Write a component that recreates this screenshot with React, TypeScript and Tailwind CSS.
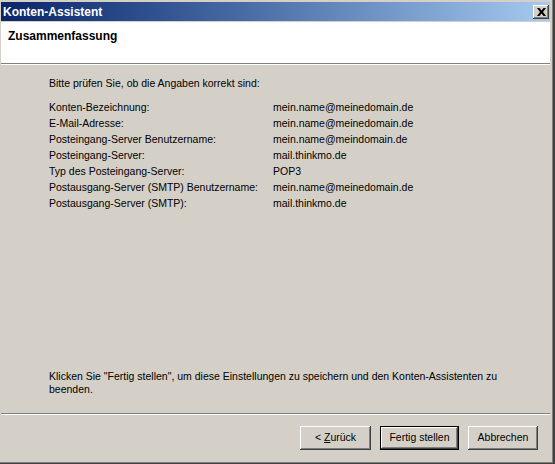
import React from 'react';

const rows: [string, string][] = [
  ['Konten-Bezeichnung:', 'mein.name@meinedomain.de'],
  ['E-Mail-Adresse:', 'mein.name@meinedomain.de'],
  ['Posteingang-Server Benutzername:', 'mein.name@meindomain.de'],
  ['Posteingang-Server:', 'mail.thinkmo.de'],
  ['Typ des Posteingang-Server:', 'POP3'],
  ['Postausgang-Server (SMTP) Benutzername:', 'mein.name@meinedomain.de'],
  ['Postausgang-Server (SMTP):', 'mail.thinkmo.de'],
];

const btn =
  'h-[24px] bg-[#d4d0c8] text-black shadow-[inset_-1px_-1px_#404040,inset_1px_1px_#ffffff,inset_-2px_-2px_#808080,inset_2px_2px_#d4d0c8]';

export default function App() {
  return (
    <div
      className="w-[555px] h-[464px] flex flex-col bg-[#d4d0c8] border-r-[2px] border-b border-[#404040] text-[10.5px] text-black"
      style={{ fontFamily: '"Liberation Sans", Arial, sans-serif' }}
    >
      <div className="flex-1 flex flex-col border-r border-b border-[#808080] pt-[2px] pl-[1px] pr-[2px]">
        {/* Title bar */}
        <div className="h-[19px] flex items-center justify-between pl-[2px] pr-[1px] bg-gradient-to-r from-[#0a246a] to-[#a6caf0]">
          <span className="text-white font-bold text-[12px]">Konten-Assistent</span>
          <button className="w-[16px] h-[14px] flex items-center justify-center bg-[#d4d0c8] shadow-[inset_-1px_-1px_#404040,inset_1px_1px_#ffffff,inset_-2px_-2px_#808080]">
            <svg width="9" height="8" viewBox="0 0 9 8">
              <path d="M0 0h2.5l2 2.5 2-2.5H9L6 4l3 4H6.5l-2-2.5-2 2.5H0l3-4z" fill="#000" />
            </svg>
          </button>
        </div>

        {/* Header */}
        <div className="mt-[1px] h-[42px] bg-white border-b border-[#808080] pl-[7px] pt-[5px]">
          <span className="font-bold text-[12px]">Zusammenfassung</span>
        </div>
        <div className="h-px bg-white" />

        {/* Summary */}
        <div className="pl-[48px] pt-[10px]">
          <div className="leading-[16px]">Bitte prüfen Sie, ob die Angaben korrekt sind:</div>
          <div className="mt-[8px]">
            {rows.map(([label, value]) => (
              <div key={label} className="flex leading-[16px]">
                <span className="w-[224px]">{label}</span>
                <span>{value}</span>
              </div>
            ))}
          </div>
        </div>

        <div className="flex-1" />

        <div className="pl-[48px] leading-[13px]">
          Klicken Sie "Fertig stellen", um diese Einstellungen zu speichern und den Konten-Assistenten zu
          <br />
          beenden.
        </div>

        <div className="mt-[17px] h-px bg-[#808080]" />
        <div className="h-px bg-white" />

        <div className="flex justify-end gap-[9px] pt-[11px] pb-[12px] pr-[12px]">
          <button className={`${btn} w-[71px]`}>
            &lt; <span className="underline">Z</span>urück
          </button>
          <button className="w-[79px] h-[24px] border border-black">
            <div className={`${btn} w-full h-full flex items-center justify-center`}>Fertig stellen</div>
          </button>
          <button className={`${btn} w-[70px]`}>Abbrechen</button>
        </div>
      </div>
    </div>
  );
}
